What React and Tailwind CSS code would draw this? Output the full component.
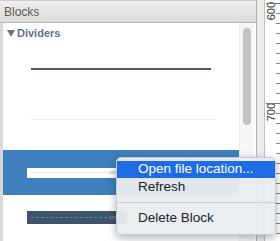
export default function App() {
  const ticks = Array.from({ length: 24 }, (_, i) => i);
  return (
    <div className="relative w-[280px] h-[241px] overflow-hidden bg-white flex font-['Liberation_Sans',Arial,sans-serif]">
      {/* Blocks panel */}
      <div className="w-[257px] flex flex-col border-r border-[#b4b4b4]">
        <div className="h-[23px] flex-shrink-0 flex items-center pl-[4px] border-t border-[#cfcfcf] border-b border-b-[#b9b9b9] bg-gradient-to-b from-[#eeeeee] to-[#dcdcdc]">
          <span className="text-[12px] text-[#5a5a5a]">Blocks</span>
        </div>
        <div className="flex-1 flex border-l-[3px] border-[#d9d9d9]">
          <div className="w-[236px] flex flex-col">
            <div className="h-[20px] flex items-center pl-[4px] gap-[2px]">
              <svg width="8" height="7" viewBox="0 0 8 7">
                <path d="M0 0 H8 L4 7 Z" fill="#6b7583" />
              </svg>
              <span className="text-[11px] font-bold text-[#617089]">Dividers</span>
            </div>
            <div className="h-[51px] flex items-center pl-[28px]">
              <div className="w-[180px] h-[2px] bg-[#4b5b70]" />
            </div>
            <div className="h-[51px] flex items-center pl-[28px]">
              <div className="w-[184px] h-px bg-[#ececec]" />
            </div>
            <div className="h-[5px]" />
            <div className="h-[45px] bg-[#3f7fbd] flex items-center pl-[24px]">
              <div className="w-[100px] h-[10px] bg-white flex items-center pl-[4px] gap-[2px]">
                <div className="w-[76px] h-px bg-[#e4e4e4]" />
                <span className="text-[4px] text-[#999]">DIVI</span>
              </div>
            </div>
            <div className="h-[16px]" />
            <div className="pl-[24px]">
              <div className="w-[100px] h-[13px] bg-[#3f536b] flex items-center pl-[4px] gap-[2px]">
                <div className="w-[76px] border-t border-dashed border-[#2fa59a]" />
                <span className="text-[4px] text-[#a8b4c0]">DIVI</span>
              </div>
            </div>
          </div>
          {/* scrollbar */}
          <div className="w-[15px] bg-[#f6f6f6] border-l border-[#ededed] flex justify-center pt-[5px]">
            <div className="w-[8px] h-[97px] rounded-full bg-[#c3c3c3]" />
          </div>
        </div>
      </div>
      {/* ruler */}
      <div className="w-[8px] bg-[#ececec] border-r border-[#bdbdbd]" />
      <div className="relative flex-1 bg-white">
        <span className="absolute left-[1px] top-[2px] text-[11px] text-[#333] [writing-mode:vertical-rl] rotate-180 leading-none">600</span>
        <span className="absolute left-[1px] top-[103px] text-[11px] text-[#333] [writing-mode:vertical-rl] rotate-180 leading-none">700</span>
        <div className="absolute right-0 top-[3px] flex flex-col">
          {ticks.map((i) => (
            <div key={i} className="h-[10px] flex items-start justify-end">
              <div className={i % 10 === 0 ? 'w-[14px] h-px bg-[#777]' : 'w-[4px] h-px bg-[#888]'} />
            </div>
          ))}
        </div>
      </div>

      {/* context menu */}
      <div className="absolute left-[116px] top-[157px] w-[160px] pt-[3px] pb-[7px] rounded-[5px] bg-[#e9edf1]/95 border border-[#c8ccd0] shadow-[0_3px_10px_rgba(0,0,0,0.3)] text-[13.5px] text-[#222]">
        <div className="h-[17px] flex items-center pl-[21px] bg-[#1f6be3] text-white">Open file location...</div>
        <div className="h-[18px] flex items-center pl-[21px]">Refresh</div>
        <div className="my-[6px] h-px bg-[#cdd0d4]" />
        <div className="h-[18px] flex items-center pl-[21px]">Delete Block</div>
      </div>
    </div>
  );
}
